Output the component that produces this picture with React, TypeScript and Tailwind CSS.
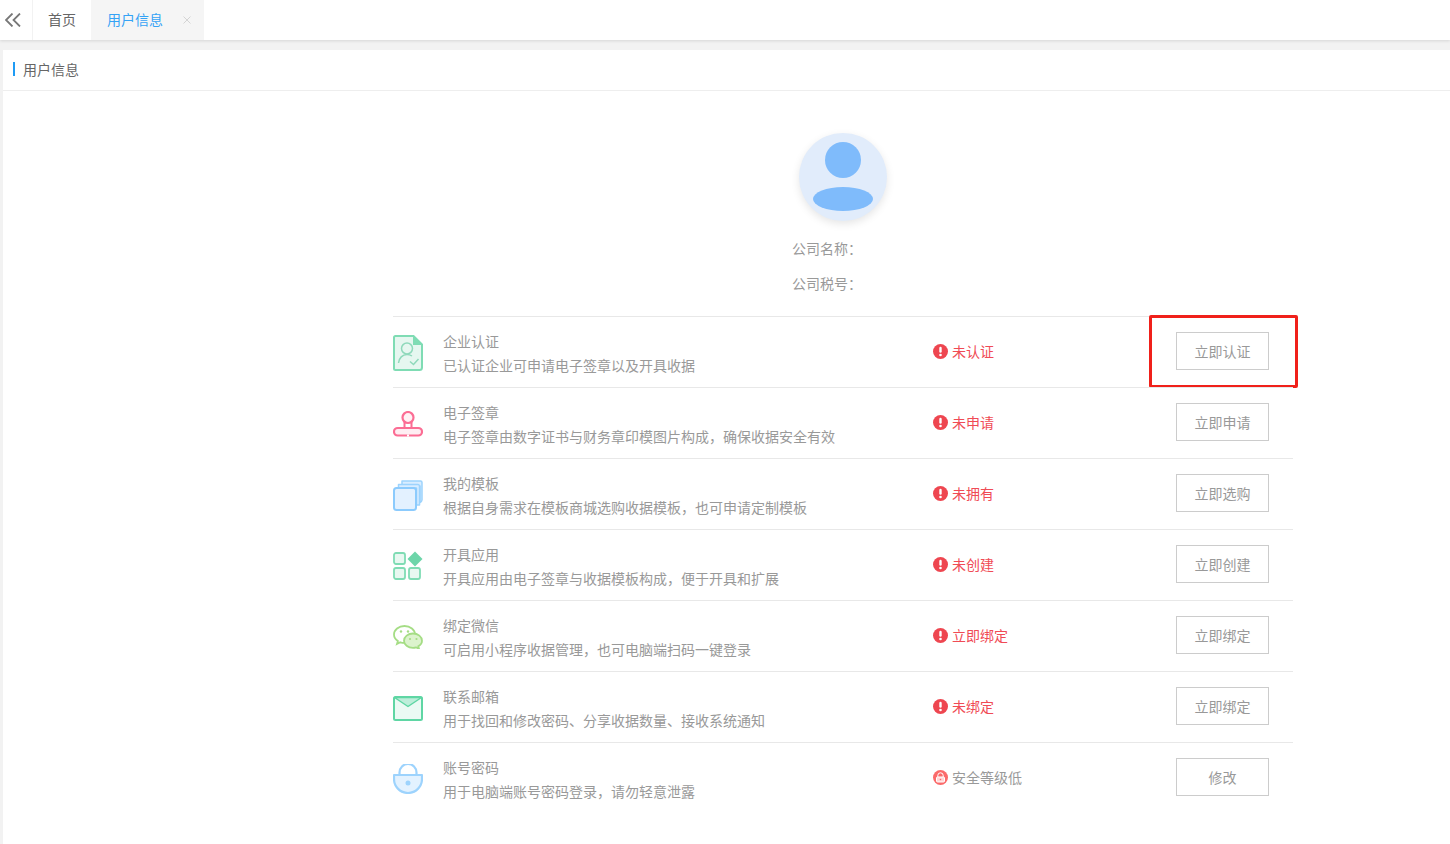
import React from "react";

const font = { fontFamily: '"Noto Sans CJK SC", "Noto Sans", sans-serif' };

function CertIcon() {
	return (
		<svg width="30" height="36" viewBox="0 0 30 36" fill="none">
			<path d="M2.500 1h18L29 9.500v23a2.500 2.500 0 0 1-2.500 2.500h-24A1.500 1.500 0 0 1 1 33.500V2.500A1.500 1.500 0 0 1 2.500 1z" fill="#e6f7f0" stroke="#7fdcb4" strokeWidth="2" />
			<path d="M20 1v9h9z" fill="#7fdcb4" />
			<circle cx="14" cy="13.500" r="5.500" stroke="#8fd9bb" strokeWidth="1.500" />
			<path d="M5.500 28c.5-5 4-8.500 8.500-8.500 2 0 3.500.5 5 1.500" stroke="#8fd9bb" strokeWidth="1.500" />
			<path d="M17 26.500l3.500 3 5-5.500" stroke="#8fd9bb" strokeWidth="1.500" />
		</svg>
	);
}

function StampIcon() {
	return (
		<svg width="30" height="26" viewBox="0 0 30 26" fill="none">
			<circle cx="15" cy="6.500" r="5.500" fill="#fff2f5" stroke="#fb6d94" strokeWidth="2.200" />
			<path d="M11.500 11v6M18.500 11v6" stroke="#fb6d94" strokeWidth="2" />
			<rect x="1" y="17" width="28" height="7.500" rx="3.700" fill="#ffeef3" stroke="#fb6d94" strokeWidth="2.200" />
			<path d="M14 24.500h2" stroke="#fff" strokeWidth="2.200" />
		</svg>
	);
}

function TemplateIcon() {
	return (
		<svg width="30" height="31" viewBox="0 0 30 31" fill="none">
			<path d="M9 1h18.500A1.500 1.500 0 0 1 29 2.500V20a3 3 0 0 1-2 2.500V6H9z" fill="#d9edff" stroke="#9dd3fd" strokeWidth="1.500" strokeLinejoin="round" />
			<path d="M5.500 4.500h19.500a1.500 1.500 0 0 1 1.500 1.500v19h-3V8H5.500z" fill="#d9edff" stroke="#9dd3fd" strokeWidth="1.500" strokeLinejoin="round" />
			<rect x="1" y="8" width="22" height="22" rx="2.500" fill="#e3f1ff" stroke="#8ccbfd" strokeWidth="2" />
		</svg>
	);
}

function AppsIcon() {
	return (
		<svg width="30" height="30" viewBox="0 0 30 30" fill="none">
			<rect x="1" y="2" width="11" height="11" rx="2" fill="#e8f8f1" stroke="#7fdcb4" strokeWidth="1.800" />
			<path d="M22 0.500l7.500 7.500-7.500 7.500-7.500-7.500z" fill="#6dd5a9" />
			<rect x="1" y="17" width="11" height="11" rx="2" fill="#e8f8f1" stroke="#7fdcb4" strokeWidth="1.800" />
			<rect x="16" y="17" width="11" height="11" rx="2" fill="#e8f8f1" stroke="#7fdcb4" strokeWidth="1.800" />
		</svg>
	);
}

function WechatIcon() {
	return (
		<svg width="30" height="24" viewBox="0 0 30 24" fill="none">
			<path d="M11.500 1C5.700 1 1 4.800 1 9.500c0 2.700 1.500 5 3.900 6.600L4 19l3.300-1.700c1.300.4 2.700.6 4.200.6 5.800 0 10.500-3.800 10.500-8.400S17.300 1 11.500 1z" fill="#fff" stroke="#a5dd85" strokeWidth="1.800" />
			<path d="M20 8.500c-5 0-9 3.200-9 7.200s4 7.200 9 7.200c1.100 0 2.200-.2 3.200-.5l2.800 1.400-.7-2.500c2.300-1.300 3.700-3.300 3.700-5.600 0-4-4-7.200-9-7.200z" fill="#dcf3cd" stroke="#a5dd85" strokeWidth="1.800" />
			<circle cx="8" cy="6.500" r="1.200" fill="#a5dd85" />
			<circle cx="15" cy="6.500" r="1.200" fill="#a5dd85" />
			<circle cx="17" cy="14" r="1.100" fill="#a5dd85" />
			<circle cx="23.500" cy="14" r="1.100" fill="#a5dd85" />
		</svg>
	);
}

function MailIcon() {
	return (
		<svg width="30" height="26" viewBox="0 0 30 26" fill="none" className="mt-[2px]">
			<rect x="1" y="1" width="28" height="23" rx="1.500" fill="#ebfaf4" stroke="#5fd6a4" strokeWidth="2" />
			<path d="M1.500 1.500L15 10.500l13.500-9z" fill="#bdeeda" stroke="#5fd6a4" strokeWidth="1.500" strokeLinejoin="round" />
		</svg>
	);
}

function LockIcon() {
	return (
		<svg width="30" height="30" viewBox="0 0 30 30" fill="none">
			<path d="M6.500 11V8.500a8.500 8.500 0 0 1 17 0V11" stroke="#9dd3fd" strokeWidth="2.200" />
			<path d="M1 11h28v4a14 14 0 0 1-28 0z" fill="#e3f2ff" stroke="#9dd3fd" strokeWidth="2.200" strokeLinejoin="round" />
			<circle cx="15" cy="19" r="2.500" fill="#9dd3fd" />
		</svg>
	);
}

function WarnDot() {
	return (
		<svg width="15" height="15" viewBox="0 0 15 15" className="shrink-0">
			<circle cx="7.500" cy="7.500" r="7.500" fill="#ee4650" />
			<rect x="6.300" y="2.800" width="2.400" height="6" rx="1.200" fill="#fff" />
			<circle cx="7.500" cy="11" r="1.300" fill="#fff" />
		</svg>
	);
}

function LockDot() {
	return (
		<svg width="15" height="15" viewBox="0 0 15 15" className="shrink-0">
			<circle cx="7.500" cy="7.500" r="7.500" fill="#fb6a6a" />
			<path d="M4.800 7V5.500a2.700 2.700 0 0 1 5.400 0V7" fill="none" stroke="#fff" strokeWidth="1" />
			<rect x="3.500" y="7" width="8" height="5" rx="1" fill="#ffd6d6" stroke="#fff" strokeWidth="1" />
			<circle cx="7.500" cy="9.500" r="0.800" fill="#fb6a6a" />
		</svg>
	);
}

const rows = [
	{ icon: <CertIcon />, title: "企业认证", desc: "已认证企业可申请电子签章以及开具收据", status: "未认证", action: "立即认证", marked: true },
	{ icon: <StampIcon />, title: "电子签章", desc: "电子签章由数字证书与财务章印模图片构成，确保收据安全有效", status: "未申请", action: "立即申请" },
	{ icon: <TemplateIcon />, title: "我的模板", desc: "根据自身需求在模板商城选购收据模板，也可申请定制模板", status: "未拥有", action: "立即选购" },
	{ icon: <AppsIcon />, title: "开具应用", desc: "开具应用由电子签章与收据模板构成，便于开具和扩展", status: "未创建", action: "立即创建" },
	{ icon: <WechatIcon />, title: "绑定微信", desc: "可启用小程序收据管理，也可电脑端扫码一键登录", status: "立即绑定", action: "立即绑定" },
	{ icon: <MailIcon />, title: "联系邮箱", desc: "用于找回和修改密码、分享收据数量、接收系统通知", status: "未绑定", action: "立即绑定" },
	{ icon: <LockIcon />, title: "账号密码", desc: "用于电脑端账号密码登录，请勿轻意泄露", status: "安全等级低", action: "修改", safe: true },
];

export default function App() {
	return (
		<div className="h-[844px] w-full overflow-hidden bg-[#f2f2f2] text-sm" style={font}>
			{/* Tabs */}
			<div className="flex h-10 items-stretch bg-white shadow-[0_1px_3px_rgba(0,0,0,0.12)]">
				<div className="flex w-[33px] items-center justify-center border-r border-[#f2f2f2] pr-[6px] text-[#777]">
					<svg width="16" height="14" viewBox="0 0 16 14" fill="none" stroke="#777" strokeWidth="1.800">
						<path d="M7.500 0.500L1 7l6.500 6.500M15 0.500L8.500 7l6.500 6.500" />
					</svg>
				</div>
				<div className="flex w-[58px] items-center justify-center pb-[2px] text-[#666]">首页</div>
				<div className="flex w-[113px] items-center bg-[#f5f5f5] pb-[2px] pl-4 text-[#35a3f5]">
					<span>用户信息</span>
					<svg width="8" height="8" viewBox="0 0 8 8" className="ml-[20px] mt-[2px]" stroke="#d4d4d4" strokeWidth="1">
						<path d="M0.500 0.500l7 7M7.500 0.500l-7 7" />
					</svg>
				</div>
			</div>

			{/* Panel */}
			<div className="ml-[3px] mt-[10px] h-[794px] bg-white">
				<div className="flex h-[41px] items-center border-b border-[#eeeeee] pb-[2px] pl-[10px] text-[#666]">
					<span className="mr-2 h-[14px] w-[2px] bg-[#1e9bf5]" />
					用户信息
				</div>

				<div className="ml-[390px] flex w-[900px] flex-col items-center">
					<div className="mt-[42px] flex h-[88px] w-[88px] flex-col items-center rounded-full bg-[#e1ecfb] shadow-[0_3px_8px_rgba(0,0,0,0.1)]">
						<span className="mt-[9px] h-9 w-9 rounded-full bg-[#7fbbfb]" />
						<span className="mt-[9px] h-6 w-[60px] rounded-[50%] bg-[#7fbbfb]" />
					</div>
					<div className="mt-[9px] flex h-[35px] w-[102px] items-center text-[#999]">公司名称：</div>
					<div className="flex h-[35px] w-[102px] items-center text-[#999]">公司税号：</div>

					<div className="mt-[16px] w-full">
						{rows.map((row) => (
							<div key={row.title} className="relative flex h-[71px] items-center border-t border-[#e8e8e8] pb-[2px]">
								<div className="flex w-[50px] shrink-0 items-center pt-[4px]">{row.icon}</div>
								<div className="flex-1 pt-[4px]">
									<div className="leading-[24px] text-[#999]">{row.title}</div>
									<div className="leading-[24px] text-[#999]">{row.desc}</div>
								</div>
								<div className={`flex w-[243px] items-center gap-1 ${row.safe ? "text-[#999]" : "text-[#f04b55]"}`}>
									{row.safe ? <LockDot /> : <WarnDot />}
									<span>{row.status}</span>
								</div>
								<button className="mr-[24px] h-[38px] w-[93px] border border-[#cccccc] bg-white text-[#999]">{row.action}</button>
								{row.marked && <div className="absolute left-[756px] top-[-2px] h-[73px] w-[149px] rounded-[2px] border-[3px] border-[#f0201a]" />}
							</div>
						))}
					</div>
				</div>
			</div>
		</div>
	);
}
